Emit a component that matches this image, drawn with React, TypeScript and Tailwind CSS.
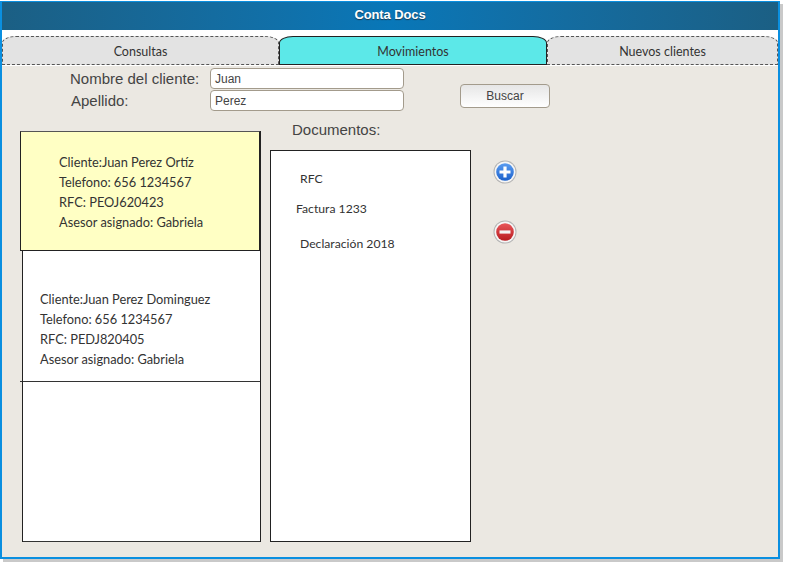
const hand = "font-['Lato',sans-serif] text-[#333]";

function Tab({ label, active, w }: { label: string; active?: boolean; w: string }) {
  return (
    <div
      className={`${w} h-[29px] pt-[3px] rounded-t-[14px_7px] flex items-center justify-center text-[12.5px] ${hand} ${
        active ? "bg-[#5ce8e8] border border-[#222]" : "bg-[#e3e3e3] border border-dashed border-[#555]"
      }`}
    >
      {label}
    </div>
  );
}

function Input({ value }: { value: string }) {
  return (
    <div className="w-[194px] h-[21px] bg-white border border-[#a39b8c] rounded-[4px] pl-[4px] text-[12px] leading-[20px] text-[#444] font-['Liberation_Sans',sans-serif]">
      {value}
    </div>
  );
}

function Lines({ lines }: { lines: string[] }) {
  return (
    <div className={`flex flex-col text-[12.8px] leading-[20px] ${hand}`}>
      {lines.map((l) => (
        <div key={l}>{l}</div>
      ))}
    </div>
  );
}

function RoundIcon({ kind }: { kind: "plus" | "minus" }) {
  const id = kind;
  const top = kind === "plus" ? "#5a9cf0" : "#e8565a";
  const bottom = kind === "plus" ? "#1c62cc" : "#b81c20";
  return (
    <svg width="24" height="24" viewBox="0 0 24 24">
      <defs>
        <linearGradient id={id} x1="0" y1="0" x2="0" y2="1">
          <stop offset="0" stopColor={top} />
          <stop offset="1" stopColor={bottom} />
        </linearGradient>
      </defs>
      <circle cx="12" cy="12" r="11.5" fill="#b5b5b5" />
      <circle cx="12" cy="12" r="10.5" fill="#f6f6f6" />
      <circle cx="12" cy="12" r="8.8" fill={`url(#${id})`} />
      {kind === "plus" ? <path d="M12 6.5v11M6.5 12h11" stroke="#fff" strokeWidth="3.2" /> : <path d="M6.5 12h11" stroke="#f4f4f4" strokeWidth="3.2" />}
    </svg>
  );
}

export default function App() {
  return (
    <div className="w-[786px] h-[563px] bg-white pt-[1px]">
      <div className="w-[780px] h-[558px] border-2 border-t border-[#0a8fe0] shadow-[3px_3px_0_#c9c9c9] flex flex-col bg-white">
        <div className="h-[28px] pb-[3px] shrink-0 bg-gradient-to-r from-[#1b5f84] via-[#0877b8] to-[#1b5f84] flex items-center justify-center text-white font-bold text-[13px] -tracking-[0.1px] [text-shadow:0_1px_1px_#1a3a50] font-['Liberation_Sans',sans-serif]">
          Conta Docs
        </div>
        <div className="h-[6px] shrink-0" />
        <div className="flex shrink-0 h-[30px] pb-[1px]">
          <Tab label="Consultas" w="w-[277px]" />
          <Tab label="Movimientos" active w="w-[268px]" />
          <Tab label="Nuevos clientes" w="w-[231px]" />
        </div>
        <div className="flex-1 bg-[#ebe8e2] min-h-0 flex flex-col">
          <div className="flex h-[54px] mt-[2px] shrink-0">
            <div className="w-[68px]" />
            <div className="w-[140px] flex flex-col text-[15px] text-[#444] font-['Liberation_Sans',sans-serif]">
              <div className="h-[22px] leading-[21px]">Nombre del cliente:</div>
              <div className="h-[22px] leading-[21px] pl-[1px]">Apellido:</div>
            </div>
            <div className="flex flex-col gap-[1px]">
              <Input value="Juan" />
              <Input value="Perez" />
            </div>
            <div className="ml-[56px] mt-[16px] w-[90px] h-[24px] rounded-[4px] border border-[#a39b8c] bg-gradient-to-b from-[#e6e6e6] to-white flex items-center justify-center text-[12px] text-[#444] font-['Liberation_Sans',sans-serif]">
              Buscar
            </div>
          </div>
          <div className="flex flex-1 min-h-0 mb-[15px]">
            <div className="ml-[18px] w-[241px] mt-[9px] flex flex-col border-r border-[#222] relative">
              <div className="absolute bottom-0 left-[2px] top-[120px] w-px bg-[#222]" />
              <div className="h-[120px] w-full bg-[#ffffc4] border border-[#222] border-t-[#555] shrink-0 pl-[38px] pt-[20px]">
                <Lines lines={["Cliente:Juan Perez Ortíz", "Telefono: 656 1234567", "RFC: PEOJ620423", "Asesor asignado: Gabriela"]} />
              </div>
              <div className="h-[131px] shrink-0 border-b border-[#333] pl-[2px]">
                <div className="h-full bg-white pl-[18px] pt-[38px]">
                  <Lines lines={["Cliente:Juan Perez Dominguez", "Telefono: 656 1234567", "RFC: PEDJ820405", "Asesor asignado: Gabriela"]} />
                </div>
              </div>
              <div className="flex-1 ml-[2px] bg-white border-b border-[#333]" />
            </div>
            <div className="ml-[9px] flex flex-col">
              <div className="h-[28px] pl-[22px] text-[15px] leading-[16px] text-[#444] font-['Liberation_Sans',sans-serif]">Documentos:</div>
              <div className={`flex-1 w-[201px] bg-white border border-[#222] text-[12.2px] ${hand}`}>
                <div className="pl-[29px] pt-[19px] leading-[18px]">RFC</div>
                <div className="pl-[25px] pt-[12px] leading-[18px]">Factura 1233</div>
                <div className="pl-[29px] pt-[17px] leading-[18px]">Declaración 2018</div>
              </div>
            </div>
            <div className="ml-[22px] mt-[38px] flex flex-col gap-[36px]">
              <RoundIcon kind="plus" />
              <RoundIcon kind="minus" />
            </div>
          </div>
        </div>
      </div>
    </div>
  );
}
